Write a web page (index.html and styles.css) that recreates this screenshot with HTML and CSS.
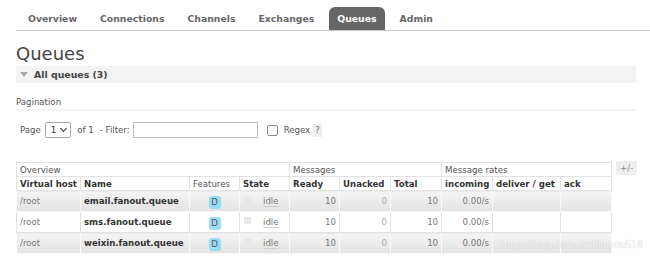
FILE: index.html
```html
<!DOCTYPE html>
<html lang="en">
<head>
    <meta charset="UTF-8">
    <title>RabbitMQ Management</title>
    <link rel="stylesheet" href="styles.css">
</head>
<body>
    <div class="menu">
        <a href="#">Overview</a>
        <a href="#">Connections</a>
        <a href="#">Channels</a>
        <a href="#">Exchanges</a>
        <a href="#" class="selected">Queues</a>
        <a href="#">Admin</a>
    </div>

    <div class="main">
        <h1>Queues</h1>
        <h2 class="section"><span class="arrow"></span>All queues (3)</h2>

        <h3>Pagination</h3>
        <div class="pagination">
            <span>Page</span>
            <span class="select">1 <span class="chev"></span></span>
            <span>of 1</span>
            <span>- Filter:</span>
            <span class="input"></span>
            <span class="check"></span>
            <span class="regex">Regex</span>
            <span class="help">?</span>
        </div>

        <div class="table-wrap">
            <table class="list">
                <colgroup>
                    <col style="width:64px"><col style="width:109px"><col style="width:50px"><col style="width:50px">
                    <col style="width:50px"><col style="width:51px"><col style="width:51px">
                    <col style="width:51px"><col style="width:68px"><col style="width:51px">
                </colgroup>
                <thead>
                    <tr class="group">
                        <th colspan="4">Overview</th>
                        <th colspan="3">Messages</th>
                        <th colspan="3">Message rates</th>
                    </tr>
                    <tr class="cols">
                        <th>Virtual host</th>
                        <th>Name</th>
                        <th class="normal">Features</th>
                        <th>State</th>
                        <th>Ready</th>
                        <th>Unacked</th>
                        <th>Total</th>
                        <th>incoming</th>
                        <th>deliver / get</th>
                        <th>ack</th>
                    </tr>
                </thead>
                <tbody>
                    <tr class="alt">
                        <td class="vhost">/root</td>
                        <td class="name">email.fanout.queue</td>
                        <td class="c"><span class="badge">D</span></td>
                        <td><span class="box"></span><span class="idle">idle</span></td>
                        <td class="r">10</td>
                        <td class="r zero">0</td>
                        <td class="r">10</td>
                        <td class="r">0.00/s</td>
                        <td></td>
                        <td></td>
                    </tr>
                    <tr>
                        <td class="vhost">/root</td>
                        <td class="name">sms.fanout.queue</td>
                        <td class="c"><span class="badge">D</span></td>
                        <td><span class="box"></span><span class="idle">idle</span></td>
                        <td class="r">10</td>
                        <td class="r zero">0</td>
                        <td class="r">10</td>
                        <td class="r">0.00/s</td>
                        <td></td>
                        <td></td>
                    </tr>
                    <tr class="alt">
                        <td class="vhost">/root</td>
                        <td class="name">weixin.fanout.queue</td>
                        <td class="c"><span class="badge">D</span></td>
                        <td><span class="box"></span><span class="idle">idle</span></td>
                        <td class="r">10</td>
                        <td class="r zero">0</td>
                        <td class="r">10</td>
                        <td class="r">0.00/s</td>
                        <td></td>
                        <td></td>
                    </tr>
                </tbody>
            </table>
            <span class="plusminus">+/-</span>
        </div>
    </div>

    <div class="watermark">https://blog.csdn.net/liuyou516</div>
</body>
</html>
```

FILE: styles.css
```css
body {
    margin: 0;
    font-family: "DejaVu Sans", Verdana, sans-serif;
    font-size: 9px;
    color: #484848;
    background-color: #fff;
    position: relative;
    height: 262px;
    overflow: hidden;
}
.menu {
    display: flex;
    gap: 7px;
    margin-left: 16px;
    padding: 7px 0 0 4px;
    border-bottom: 1px solid #c8c8c8;
}
.menu a {
    padding: 0 8px;
    line-height: 23px;
    font-size: 9.3px;
    font-weight: bold;
    color: #666;
    text-decoration: none;
    border-radius: 6px 6px 0 0;
}
.menu a.selected {
    background-color: #666;
    color: #fff;
}
.main {
    padding: 0 14px 0 16px;
}
h1 {
    margin: 11px 0 0;
    font-size: 18px;
    line-height: 24px;
    font-weight: normal;
    color: #444;
}
.section {
    margin: 0;
    height: 17px;
    line-height: 17px;
    padding-left: 4px;
    background-color: #f3f3f3;
    font-size: 9.4px;
    font-weight: bold;
    color: #444;
}
.arrow {
    display: inline-block;
    width: 0;
    height: 0;
    border-left: 4px solid transparent;
    border-right: 4px solid transparent;
    border-top: 5px solid #aaa;
    margin-right: 6px;
    vertical-align: 1px;
}
h3 {
    margin: 12px 0 0;
    line-height: 14px;
    font-size: 8.6px;
    font-weight: normal;
    color: #555;
    border-bottom: 2px solid #f2f2f2;
}
.pagination {
    display: flex;
    align-items: center;
    gap: 6px;
    margin-top: 11px;
    padding-left: 4px;
    height: 16px;
    font-size: 8.6px;
    color: #555;
}
.pagination .select {
    display: flex;
    align-items: center;
    gap: 5px;
    height: 14px;
    padding: 0 4px 0 5px;
    border: 1px solid #aaa;
    border-radius: 2px;
    color: #333;
    margin-left: -2px;
}
.chev {
    width: 4px;
    height: 4px;
    border-right: 1.5px solid #333;
    border-bottom: 1.5px solid #333;
    transform: rotate(45deg);
    margin-top: -3px;
}
.pagination .input {
    width: 123px;
    height: 14px;
    border: 1px solid #bbb;
    margin-left: -3px;
}
.pagination .check {
    width: 9px;
    height: 9px;
    border: 1px solid #888;
    border-radius: 2px;
    margin-left: 3px;
}
.pagination .help {
    background-color: #eee;
    color: #777;
    padding: 0 2px;
    line-height: 13px;
    margin-left: -3px;
}
.table-wrap {
    display: flex;
    align-items: flex-start;
    gap: 4px;
    margin-top: 24px;
}
table.list {
    table-layout: fixed;
    width: 595px;
    border-collapse: collapse;
    font-size: 8.6px;
}
table.list th, table.list td {
    padding: 0 3px;
    border: 1px solid #e2e2e2;
    white-space: nowrap;
    overflow: hidden;
    text-align: left;
}
tr.group th {
    height: 13px;
    font-weight: normal;
    color: #555;
}
tr.cols th {
    height: 13px;
    font-weight: bold;
    color: #333;
}
tr.cols th.normal {
    font-weight: normal;
    color: #555;
}
tbody td {
    height: 20px;
    color: #777;
    background-color: #fff;
    border-color: #eee;
}
tbody tr.alt td {
    background: linear-gradient(#f4f4f4, #e3e3e3);
    border-color: #fafafa;
}
td.name {
    font-weight: bold;
    color: #333;
}
table.list td.r {
    text-align: right;
}
table.list td.c {
    text-align: center;
}
td.zero {
    color: #aaa;
}
.badge {
    display: inline-block;
    width: 12px;
    line-height: 13px;
    text-align: center;
    background-color: #98dcf5;
    border-radius: 3px;
    color: #555;
    margin-top: 2px;
}
.box {
    display: inline-block;
    width: 7px;
    height: 7px;
    background-color: #e8e8e8;
    margin: 0 11px 0 1px;
    vertical-align: 1px;
}
.idle {
    border-bottom: 1px solid #ccc;
    border-radius: 3px;
    padding: 0 1px;
    color: #777;
}
.plusminus {
    background-color: #eee;
    color: #888;
    font-size: 8.6px;
    padding: 0 4px;
    line-height: 14px;
    margin-top: -1px;
}
.watermark {
    position: absolute;
    right: 7px;
    top: 238px;
    font-family: "Liberation Sans", Arial, sans-serif;
    font-size: 10.5px;
    color: rgba(255, 255, 255, 0.85);
    text-shadow: 0 0 1px rgba(0, 0, 0, 0.25);
}
```
